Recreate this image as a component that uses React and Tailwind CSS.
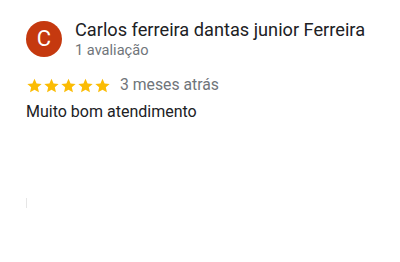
import React from "react";

function Star() {
  return (
    <svg width="17" height="17" viewBox="0 0 24 24" className="block">
      <path
        fill="#fbbc04"
        d="M12 2.5l2.94 6.58 7.16.68-5.4 4.77 1.58 7.02L12 17.9l-6.28 3.65 1.58-7.02-5.4-4.77 7.16-.68z"
      />
    </svg>
  );
}

export default function App() {
  return (
    <div
      className="w-[400px] h-[262px] bg-white overflow-hidden"
      style={{ fontFamily: "Roboto, Arial, sans-serif" }}
    >
      <div className="pl-[26px] pt-[21px]">
        <div className="flex items-start gap-[13px]">
          <div className="w-[36px] h-[36px] rounded-full bg-[#c5390f] flex items-center justify-center text-white text-[22px] leading-none">
            C
          </div>
          <div className="flex flex-col -mt-[2px]">
            <div className="text-[18.2px] leading-[22px] text-[#202124]">
              Carlos ferreira dantas junior Ferreira
            </div>
            <div className="text-[14.6px] leading-[18px] text-[#70757a]">
              1 avaliação
            </div>
          </div>
        </div>
        <div className="flex items-center mt-[16px]">
          <div className="flex items-center gap-[0px]">
            <Star />
            <Star />
            <Star />
            <Star />
            <Star />
          </div>
          <span className="ml-[9px] text-[15.75px] leading-[20px] text-[#70757a]">
            3 meses atrás
          </span>
        </div>
        <div className="mt-[6px] text-[16px] leading-[22px] text-[#202124]">
          Muito bom atendimento
        </div>
        <div className="mt-[75px] w-[1px] h-[10px] bg-[#e6e6e6]" />
      </div>
    </div>
  );
}
